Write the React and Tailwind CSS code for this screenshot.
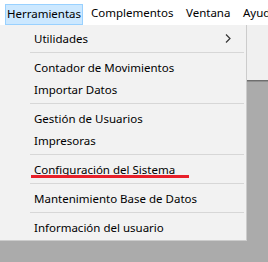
import React from "react";

const menuItems = [
  { label: "Utilidades", submenu: true },
  { sep: true },
  { label: "Contador de Movimientos" },
  { label: "Importar Datos" },
  { sep: true },
  { label: "Gestión de Usuarios" },
  { label: "Impresoras" },
  { sep: true },
  { label: "Configuración del Sistema", marked: true },
  { sep: true },
  { label: "Mantenimiento Base de Datos" },
  { sep: true },
  { label: "Información del usuario" },
];

const App = () => {
  return (
    <div
      className="relative w-[268px] h-[262px] overflow-hidden bg-[#ababab] text-[11.5px] text-black"
      style={{ fontFamily: '"Segoe UI", "Noto Sans", sans-serif' }}
    >
      {/* Menu bar */}
      <div className="h-[25px] bg-white flex items-center whitespace-nowrap">
        <div className="ml-[5px] w-[78px] h-[21px] mt-[3px] shrink-0 flex items-center justify-center bg-[#cce8ff] border border-[#99d1ff]">
          Herramientas
        </div>
        <div className="ml-[8px] w-[95px] shrink-0">Complementos</div>
        <div className="w-[57px] shrink-0">Ventana</div>
        <div className="shrink-0">Ayuda</div>
      </div>

      {/* Window content behind the menu */}
      <div className="h-[55px] bg-[#f0f0f0]" />
      <div className="h-[1px] bg-[#6e6e6e]" />
      <div className="h-[1px] bg-[#8f8f8f]" />

      {/* Dropdown */}
      <div className="absolute left-0 top-[25px] w-[247px] bg-[#f2f2f2] border-r border-b border-[#cccccc] py-[2px]">
        {menuItems.map((item, i) =>
          item.sep ? (
            <div key={i} className="h-[7px] flex items-center pl-[30px] pr-[2px]">
              <div className="h-px flex-1 bg-[#d7d7d7]" />
            </div>
          ) : (
            <div key={i} className="relative h-[22px] flex items-center pl-[34px] pr-[12px] pt-px">
              <span className="flex-1">{item.label}</span>
              {item.submenu && (
                <svg width="6" height="9" viewBox="0 0 6 9" className="mr-[3px]">
                  <path d="M1 0.5 L5 4.5 L1 8.5" fill="none" stroke="#333" strokeWidth="1.2" />
                </svg>
              )}
              {item.marked && (
                <div className="absolute left-[31px] top-[17px] w-[158px] h-[3px] bg-[#e8202a]" />
              )}
            </div>
          )
        )}
      </div>
    </div>
  );
};

export default App;
